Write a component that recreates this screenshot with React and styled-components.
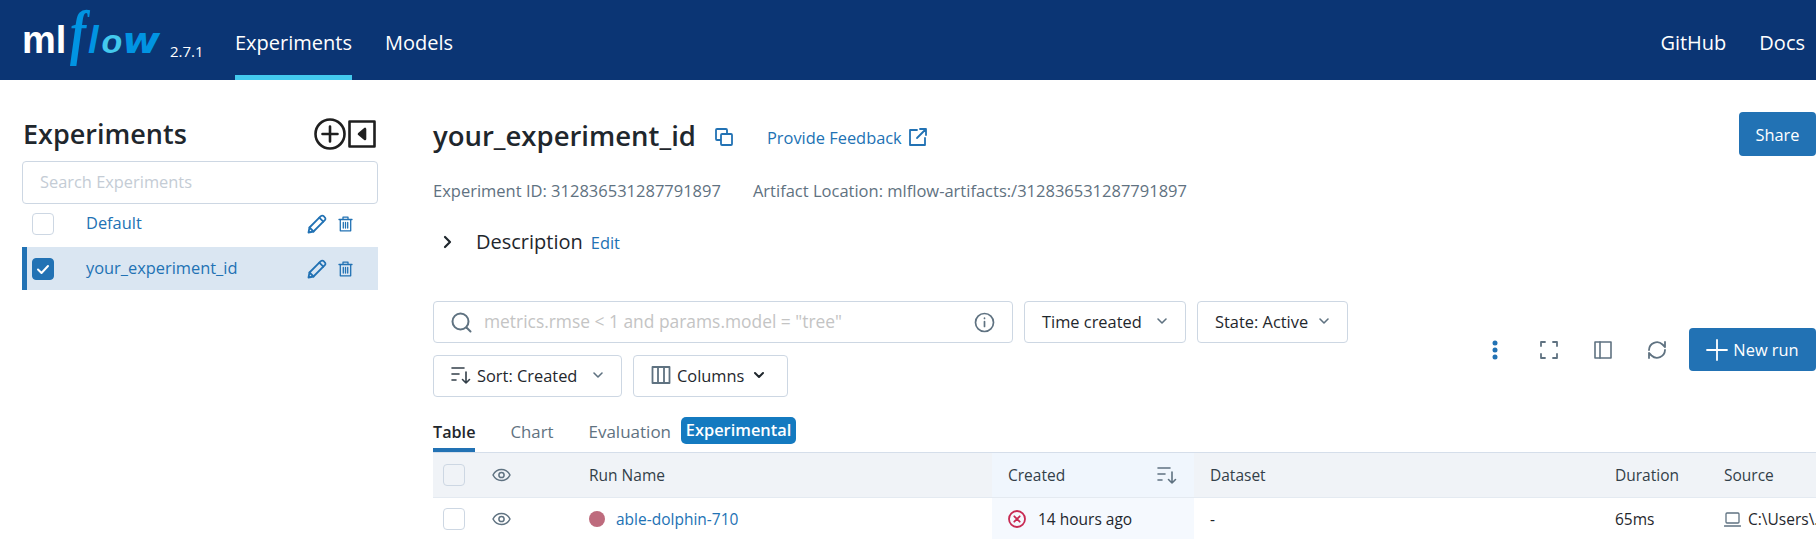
import styled, { createGlobalStyle } from "styled-components";

const GlobalStyle = createGlobalStyle`
  html, body {
    margin: 0;
    height: 100%;
    overflow: hidden;
    background: #fff;
  }
  body {
    font-family: "Open Sans", "Noto Sans", sans-serif;
    font-stretch: 92%;
    font-size: 16.4px;
    color: #1f272d;
  }
  * { box-sizing: border-box; }
`;

const Page = styled.div`
  width: 1816px;
  height: 539px;
  overflow: hidden;
`;

/* top bar */
const TopBar = styled.header`
  height: 80px;
  background: #0b3574;
  display: flex;
  align-items: stretch;
  padding: 0 11px 0 22px;
  color: #fff;
`;

const Logo = styled.div`
  width: 140px;
  display: flex;
  align-items: baseline;
  padding-top: 1px;
  white-space: nowrap;
`;

const LogoMl = styled.span`
  font-family: "Liberation Sans", sans-serif;
  font-weight: 700;
  font-size: 38px;
  line-height: 1;
`;

const LogoF = styled.span`
  display: inline-block;
  font-family: "Liberation Serif", serif;
  font-style: italic;
  font-weight: 700;
  font-size: 62px;
  line-height: 1;
  color: #0194e2;
  margin: 0 -3px 0 4px;
  transform: scaleX(0.78);
  transform-origin: left center;
`;

const LogoL = styled.span`
  font-family: "Liberation Sans", sans-serif;
  font-style: italic;
  font-weight: 700;
  font-size: 38px;
  line-height: 1;
  color: #0194e2;
`;

const LogoO = styled.span`
  font-family: "Liberation Sans", sans-serif;
  font-style: italic;
  font-weight: 700;
  font-size: 34px;
  line-height: 1;
  margin-left: 3px;
  color: #43c9ed;
`;

const LogoW = styled.span`
  display: inline-block;
  font-family: "DejaVu Sans", sans-serif;
  font-style: italic;
  font-weight: 700;
  font-size: 36px;
  line-height: 1;
  color: #0194e2;
  transform: scaleX(1.15);
  transform-origin: left center;
`;

const Version = styled.span`
  font-size: 15px;
  width: 73px;
  padding: 41px 0 0 8px;
`;

const NavLink = styled.a`
  font-size: 20px;
  margin-right: 33px;
  height: 80px;
  padding-top: 27px;
  line-height: 32px;
  border-bottom: 5px solid ${(p) => (p.$active ? "#43c9ed" : "transparent")};
`;

const NavRight = styled.div`
  margin-left: auto;
  display: flex;
  a:last-child { margin-right: 0; }
`;

/* body columns */
const Columns = styled.div`
  display: flex;
  height: 459px;
`;

const Sidebar = styled.aside`
  width: 356px;
  margin-left: 22px;
  flex: none;
  padding-top: 32px;
`;

const SidebarHead = styled.div`
  display: flex;
  align-items: center;
  justify-content: space-between;
  height: 49px;
  padding: 0 2px 6px 1px;
`;

const SidebarTitle = styled.h2`
  margin: 0;
  font-size: 27px;
  font-weight: 600;
  color: #1f272d;
`;

const HeadIcons = styled.div`
  display: flex;
  align-items: center;
  gap: 2px;
`;

const SearchBox = styled.div`
  height: 43px;
  border: 1px solid #cdd7e3;
  border-radius: 4px;
  padding: 0 0 2px 17px;
  display: flex;
  align-items: center;
  color: #c4ccd5;
`;

const ExperimentRow = styled.div`
  height: ${(p) => (p.$selected ? 43 : 39)}px;
  margin-top: ${(p) => (p.$selected ? 4 : 0)}px;
  display: flex;
  align-items: center;
  padding-left: ${(p) => (p.$selected ? "5px" : "10px")};
  background: ${(p) => (p.$selected ? "#dae6f2" : "transparent")};
  border-left: ${(p) => (p.$selected ? "5px solid #2272b4" : "0")};
  color: #2272b4;
`;

const Check = styled.span`
  width: 22px;
  height: 22px;
  flex: none;
  border-radius: 4px;
  border: 1.5px solid ${(p) => (p.$checked ? "#2272b4" : "#cdd7e3")};
  background: ${(p) => (p.$checked ? "#2272b4" : p.$bg || "#fff")};
  display: flex;
  align-items: center;
  justify-content: center;
`;

const RowName = styled.span`
  margin-left: 32px;
  padding-bottom: 2px;
  flex: 1;
`;

const RowActions = styled.span`
  display: flex;
  align-items: center;
  gap: 11px;
  margin-right: 25px;
`;

/* main area */
const Main = styled.main`
  flex: 1;
  min-width: 0;
  margin-left: 55px;
`;

const TitleRow = styled.div`
  display: flex;
  height: 44px;
  margin-top: 32px;
`;

const TitleGroup = styled.div`
  display: flex;
  align-items: center;
  height: 44px;
  padding-top: 6px;
`;

const Title = styled.h1`
  margin: 0 0 3px;
  font-size: 27.5px;
  font-weight: 600;
  color: #1f272d;
  width: 281px;
`;

const FeedbackLink = styled.a`
  margin-left: 33px;
  color: #2272b4;
  display: flex;
  align-items: center;
  gap: 6px;
`;

const PrimaryButton = styled.button`
  margin-left: auto;
  height: ${(p) => p.$h}px;
  width: ${(p) => p.$w}px;
  flex: none;
  background: #2272b4;
  color: #fff;
  border: 0;
  border-radius: 4px;
  font: inherit;
  font-stretch: inherit;
  display: flex;
  align-items: center;
  justify-content: center;
  gap: 5px;
  padding: 0;
`;

const MetaRow = styled.div`
  display: flex;
  gap: 32px;
  color: #5f7281;
  margin-top: 23px;
  line-height: 24px;
  font-size: 16.5px;
`;

const DescriptionRow = styled.div`
  display: flex;
  align-items: baseline;
  margin-top: 25px;
  height: 28px;
  padding-left: 10px;
`;

const DescriptionLabel = styled.span`
  font-size: 20px;
  margin-left: 23px;
  margin-right: 8px;
`;

const EditLink = styled.a`
  color: #2272b4;
`;

const Controls = styled.div`
  display: flex;
  margin-top: 45px;
  height: 96px;
`;

const Filters = styled.div`
  width: 915px;
  flex: none;
  display: flex;
  flex-wrap: wrap;
  align-content: flex-start;
  gap: 12px 11px;
`;

const QueryBox = styled.div`
  width: 580px;
  height: 42px;
  border: 1px solid #cdd7e3;
  border-radius: 4px;
  padding: 0 17px;
  display: flex;
  align-items: center;
  gap: 12px;
  color: #c4c4c4;
  font-size: 17.4px;
  span { flex: 1; padding-bottom: 2px; }
`;

const Select = styled.div`
  height: 42px;
  width: ${(p) => p.$w}px;
  border: 1px solid #cdd7e3;
  border-radius: 4px;
  padding: 0 ${(p) => p.$pr ?? 17}px 2px 17px;
  display: flex;
  align-items: center;
  gap: 6px;
  color: #1f272d;
`;

const Caret = styled.span`
  margin-left: auto;
`;

const Toolbar = styled.div`
  flex: 1;
  display: flex;
  align-items: center;
  height: 43px;
  margin-top: 27px;
  padding-left: 144px;
`;

const ToolSlot = styled.span`
  width: ${(p) => p.$w}px;
  display: flex;
  flex: none;
`;

const Tabs = styled.div`
  display: flex;
  align-items: flex-start;
  height: 55px;
  padding-top: 23px;
`;

const Tab = styled.div`
  height: 32px;
  line-height: 24px;
  margin-right: ${(p) => p.$gap}px;
  color: ${(p) => (p.$active ? "#1f272d" : "#5f7281")};
  font-weight: ${(p) => (p.$active ? 600 : 500)};
  font-size: ${(p) => p.$size || 16.2}px;
  border-bottom: ${(p) => (p.$active ? "4px solid #2272b4" : "0")};
`;

const Badge = styled.span`
  height: 27px;
  line-height: 26px;
  width: 115px;
  margin-top: -3px;
  text-align: center;
  background: #147ac0;
  color: #fff;
  font-weight: 600;
  border-radius: 5px;
`;

const TableGrid = styled.div`
  display: grid;
  grid-template-columns: 46px 94px 419px 202px 405px 109px 1fr;
  height: ${(p) => p.$h}px;
  background: ${(p) => p.$bg};
  border-top: ${(p) => (p.$head ? "1px solid #d5deea" : "0")};
  border-bottom: ${(p) => (p.$head ? "1px solid #e4eaf1" : "0")};
  font-size: 15.5px;
  color: ${(p) => (p.$head ? "#333f49" : "#1f272d")};
  font-weight: ${(p) => (p.$head ? 500 : 400)};
`;

const Cell = styled.div`
  display: flex;
  align-items: center;
  padding-left: ${(p) => p.$pl ?? 16}px;
  gap: ${(p) => p.$gap ?? 0}px;
  background: ${(p) => p.$bg || "transparent"};
  white-space: nowrap;
  overflow: hidden;
`;

const SortIconSlot = styled.span`
  margin: 0 17px 0 auto;
`;

const RunDot = styled.span`
  width: 16px;
  height: 16px;
  border-radius: 50%;
  background: #be6b7d;
  flex: none;
`;

const RunLink = styled.a`
  color: #2272b4;
`;

/* drawings */
const Icon = ({ size = 20, w, h, color = "#5f7281", sw = 1.5, vb = "0 0 20 20", children, fill = "none" }) => (
  <svg
    width={w || size}
    height={h || size}
    viewBox={vb}
    fill={fill}
    stroke={color}
    strokeWidth={sw}
    strokeLinecap="round"
    strokeLinejoin="round"
    style={{ flex: "none", display: "block" }}
  >
    {children}
  </svg>
);

const Chevron = ({ color = "#5f7281", size = 12, sw = 1.6 }) => (
  <Caret>
    <Icon size={size} vb="0 0 12 12" color={color} sw={sw}>
      <path d="M2 4l4 4 4-4" />
    </Icon>
  </Caret>
);

const PencilIcon = () => (
  <Icon size={20} color="#2272b4" sw={1.8}>
    <path d="M1.500 18.500l1-5L13.800 2.200a2 2 0 0 1 2.900 0l1.100 1.100a2 2 0 0 1 0 2.900L6.500 17.500z" />
    <path d="M12.300 3.700l4 4M2.500 13.500l4 4" />
  </Icon>
);

const TrashIcon = () => (
  <Icon w={15} h={16} vb="0 0 15 16" color="#2272b4" sw={1.3}>
    <path d="M1 3.500h13M5 3.500V1.200h5v2.300M2.300 3.500v11.300h10.400V3.500M5.300 6.500v5.500M7.500 6.500v5.500M9.700 6.500v5.500" />
  </Icon>
);

const Eye = () => (
  <Icon w={19} h={14} vb="0 0 19 14" color="#5f7281" sw={1.5}>
    <path d="M1 7c2-3.800 5-5.500 8.500-5.500S16 3.200 18 7c-2 3.800-5 5.500-8.500 5.500S3 10.800 1 7z" />
    <circle cx="9.500" cy="7" r="2.600" />
  </Icon>
);

const SortIcon = ({ color = "#333f49" }) => (
  <Icon size={20} color={color} sw={1.6}>
    <path d="M1 3h12M1 9h7M1 15h4M15 7v11M11.500 14.500l3.500 3.500 3.500-3.500" />
  </Icon>
);

export default function App() {
  return (
    <Page>
      <GlobalStyle />
      <TopBar>
        <Logo>
          <LogoMl>ml</LogoMl>
          <LogoF>f</LogoF>
          <LogoL>l</LogoL>
          <LogoO>o</LogoO>
          <LogoW>w</LogoW>
        </Logo>
        <Version>2.7.1</Version>
        <NavLink $active>Experiments</NavLink>
        <NavLink>Models</NavLink>
        <NavRight>
          <NavLink>GitHub</NavLink>
          <NavLink>Docs</NavLink>
        </NavRight>
      </TopBar>
      <Columns>
        <Sidebar>
          <SidebarHead>
            <SidebarTitle>Experiments</SidebarTitle>
            <HeadIcons>
              <Icon size={32} vb="0 0 32 32" color="#1f1f1f" sw={2.6}>
                <circle cx="16" cy="16" r="14.500" />
                <path d="M16 8.500v15M8.500 16h15" />
              </Icon>
              <Icon size={28} vb="0 0 28 28" color="#1f1f1f" sw={2.6}>
                <rect x="1.500" y="1.500" width="25" height="25" />
                <path d="M17 9v10l-6-5z" fill="#1f1f1f" />
              </Icon>
            </HeadIcons>
          </SidebarHead>
          <SearchBox>Search Experiments</SearchBox>
          <ExperimentRow>
            <Check />
            <RowName>Default</RowName>
            <RowActions>
              <PencilIcon />
              <TrashIcon />
            </RowActions>
          </ExperimentRow>
          <ExperimentRow $selected>
            <Check $checked>
              <Icon size={14} vb="0 0 14 14" color="#fff" sw={2}>
                <path d="M2 7.500l3.500 3.500L12 4" />
              </Icon>
            </Check>
            <RowName>your_experiment_id</RowName>
            <RowActions>
              <PencilIcon />
              <TrashIcon />
            </RowActions>
          </ExperimentRow>
        </Sidebar>
        <Main>
          <TitleRow>
            <TitleGroup>
              <Title>your_experiment_id</Title>
              <Icon size={20} color="#2272b4" sw={1.8}>
                <rect x="2" y="2" width="11" height="11" rx="1" />
                <rect x="7" y="7" width="11" height="11" rx="1" fill="#fff" />
              </Icon>
              <FeedbackLink>
                Provide Feedback
                <Icon size={20} color="#2272b4" sw={1.8}>
                  <path d="M9 3H2v15h15v-7M12 2h6v6M18 2L9 11" />
                </Icon>
              </FeedbackLink>
            </TitleGroup>
            <PrimaryButton $w={77} $h={44}>Share</PrimaryButton>
          </TitleRow>
          <MetaRow>
            <span>Experiment ID: 312836531287791897</span>
            <span>Artifact Location: mlflow-artifacts:/312836531287791897</span>
          </MetaRow>
          <DescriptionRow>
            <Icon w={10} h={14} vb="0 0 10 14" color="#1f272d" sw={2.2}>
              <path d="M2 2l5 5-5 5" />
            </Icon>
            <DescriptionLabel>Description</DescriptionLabel>
            <EditLink>Edit</EditLink>
          </DescriptionRow>
          <Controls>
            <Filters>
              <QueryBox>
                <Icon size={21} vb="0 0 21 21" color="#5f7281" sw={2}>
                  <circle cx="9.500" cy="9.500" r="8" />
                  <path d="M15.500 15.500l4 4" />
                </Icon>
                <span>metrics.rmse &lt; 1 and params.model = "tree"</span>
                <Icon size={21} vb="0 0 21 21" color="#5f7281" sw={1.7}>
                  <circle cx="10.500" cy="10.500" r="9" />
                  <path d="M10.500 9.500v5M10.500 6.200v.3" />
                </Icon>
              </QueryBox>
              <Select $w={162}>
                Time created
                <Chevron />
              </Select>
              <Select $w={151}>
                State: Active
                <Chevron />
              </Select>
              <Select $w={189}>
                <SortIcon />
                Sort: Created
                <Chevron />
              </Select>
              <Select $w={155} $pr={22}>
                <Icon size={20} color="#5f7281" sw={1.8}>
                  <rect x="1.500" y="2" width="17" height="16" />
                  <path d="M7 2v16M13 2v16" />
                </Icon>
                Columns
                <Chevron color="#1f272d" sw={2} />
              </Select>
            </Filters>
            <Toolbar>
              <ToolSlot $w={48}>
                <Icon w={6} h={20} vb="0 0 6 20" color="#2272b4" fill="#2272b4" sw={0}>
                  <circle cx="3" cy="3" r="2.500" />
                  <circle cx="3" cy="10" r="2.500" />
                  <circle cx="3" cy="17" r="2.500" />
                </Icon>
              </ToolSlot>
              <ToolSlot $w={54}>
                <Icon size={18} vb="0 0 18 18" color="#5f7281" sw={1.8}>
                  <path d="M1 5V1h4M13 1h4v4M17 13v4h-4M5 17H1v-4" />
                </Icon>
              </ToolSlot>
              <ToolSlot $w={53}>
                <Icon size={18} vb="0 0 18 18" color="#5f7281" sw={1.6}>
                  <rect x="1" y="1" width="16" height="16" />
                  <path d="M6 1v16" />
                </Icon>
              </ToolSlot>
              <ToolSlot $w={42}>
                <Icon size={20} color="#5f7281" sw={1.8}>
                  <path d="M2 10a8 8 0 0 1 13.500-5.500L18 7V2M18 10a8 8 0 0 1-13.500 5.500L2 13v5" />
                </Icon>
              </ToolSlot>
              <PrimaryButton $w={127} $h={43}>
                <Icon size={22} vb="0 0 22 22" color="#fff" sw={1.8}>
                  <path d="M11 1v20M1 11h20" />
                </Icon>
                New run
              </PrimaryButton>
            </Toolbar>
          </Controls>
          <Tabs>
            <Tab $active $gap={35}>Table</Tab>
            <Tab $gap={35} $size={16.8}>Chart</Tab>
            <Tab $gap={10} $size={17}>Evaluation</Tab>
            <Badge>Experimental</Badge>
          </Tabs>
          <TableGrid $head $h={46} $bg="#f0f3f7">
            <Cell $pl={10}><Check $bg="#f0f3f7" /></Cell>
            <Cell $pl={13}><Eye /></Cell>
            <Cell>Run Name</Cell>
            <Cell $bg="#f0f6fd">
              Created
              <SortIconSlot><SortIcon color="#5f7281" /></SortIconSlot>
            </Cell>
            <Cell>Dataset</Cell>
            <Cell>Duration</Cell>
            <Cell>Source</Cell>
          </TableGrid>
          <TableGrid $h={41} $bg="#fff">
            <Cell $pl={10}><Check /></Cell>
            <Cell $pl={13}><Eye /></Cell>
            <Cell $gap={11}>
              <RunDot />
              <RunLink>able-dolphin-710</RunLink>
            </Cell>
            <Cell $bg="#f5f9fe" $gap={12}>
              <Icon size={18} vb="0 0 18 18" color="#c82a53" sw={1.8}>
                <circle cx="9" cy="9" r="8" />
                <path d="M6.300 6.300l5.400 5.400M11.700 6.300l-5.400 5.400" />
              </Icon>
              14 hours ago
            </Cell>
            <Cell>-</Cell>
            <Cell>65ms</Cell>
            <Cell $gap={7}>
              <Icon w={17} h={18} vb="0 0 17 18" color="#5f7281" sw={1.3}>
                <rect x="2" y="3" width="13" height="10" rx="1" />
                <path d="M0.500 16h16" />
              </Icon>
              C:\Users\...
            </Cell>
          </TableGrid>
        </Main>
      </Columns>
    </Page>
  );
}
